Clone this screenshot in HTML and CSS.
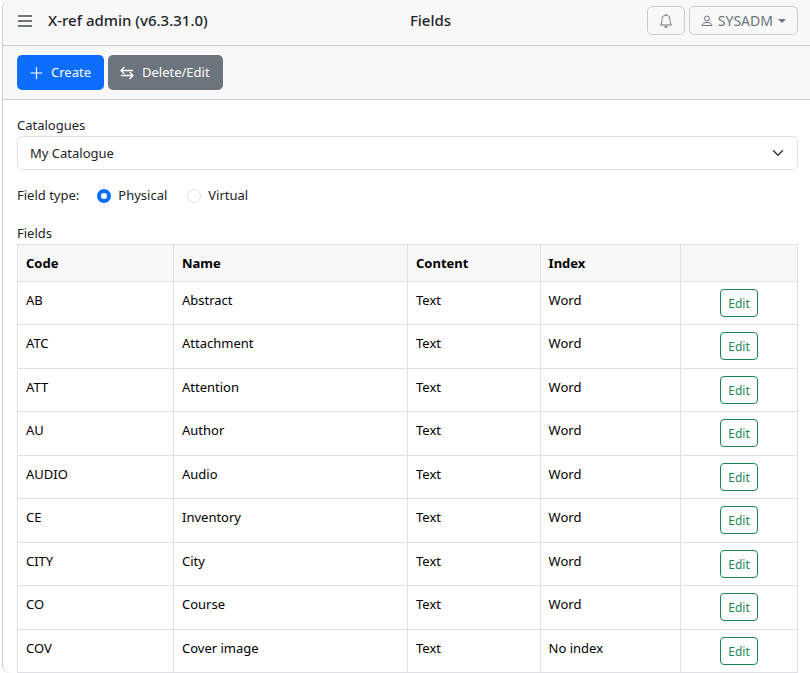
FILE: index.html
```html
<!DOCTYPE html>
<html lang="en">
<head>
    <meta charset="UTF-8">
    <meta name="viewport" content="width=device-width, initial-scale=1.0">
    <title>X-ref admin - Fields</title>
    <link rel="stylesheet" href="styles.css">
</head>
<body>
    <div class="window">
        <header class="header">
            <div class="brand">
                <button type="button" class="menu-btn" aria-label="Menu">
                    <svg width="14" height="12" viewBox="0 0 14 12" fill="currentColor"><path d="M0 0h14v2H0zM0 5h14v2H0zM0 10h14v2H0z"/></svg>
                </button>
                <span>X-ref admin (v6.3.31.0)</span>
            </div>
            <h1>Fields</h1>
            <div class="user">
                <button type="button" class="btn btn-light" aria-label="Notifications">
                    <svg width="14" height="14" viewBox="0 0 16 16" fill="currentColor"><path d="M8 16a2 2 0 0 0 2-2H6a2 2 0 0 0 2 2M8 1.918l-.797.161A4 4 0 0 0 4 6c0 .628-.134 2.197-.459 3.742-.16.767-.376 1.566-.663 2.258h10.244c-.287-.692-.502-1.49-.663-2.258C12.134 8.197 12 6.628 12 6a4 4 0 0 0-3.203-3.92zM14.22 12c.223.447.481.801.78 1H1c.299-.199.557-.553.78-1C2.68 10.2 3 6.88 3 6c0-2.42 1.72-4.44 4.005-4.901a1 1 0 1 1 1.99 0A5 5 0 0 1 13 6c0 .88.32 4.2 1.22 6"/></svg>
                </button>
                <button type="button" class="btn btn-light btn-user">
                    <svg width="12" height="12" viewBox="0 0 12 12" fill="none" stroke="currentColor"><circle cx="6" cy="3.500" r="2.500"/><path d="M1 10.500c0-2 2-3 5-3s5 1 5 3z" stroke-linejoin="round"/></svg>
                    <span>SYSADM</span>
                    <span class="caret"></span>
                </button>
            </div>
        </header>

        <div class="toolbar">
            <button type="button" class="btn btn-primary">
                <svg width="14" height="14" viewBox="0 0 14 14" fill="none" stroke="currentColor" stroke-width="1.200" stroke-linecap="round"><path d="M7.500 1.500v11M2 7h11"/></svg>
                Create
            </button>
            <button type="button" class="btn btn-secondary">
                <svg width="14" height="14" viewBox="0 0 14 14" fill="none" stroke="currentColor" stroke-width="1.300" stroke-linecap="round" stroke-linejoin="round"><path d="M12.500 4.500H1M4 1.500l-3 3 3 3M1.500 9.500H13M10 6.500l3 3-3 3"/></svg>
                Delete/Edit
            </button>
        </div>

        <main class="content">
            <label for="catalogue">Catalogues</label>
            <select id="catalogue">
                <option>My Catalogue</option>
            </select>

            <div class="field-type" role="radiogroup" aria-labelledby="type-label">
                <span id="type-label">Field type:</span>
                <input type="radio" id="physical" name="type" checked>
                <label for="physical">Physical</label>
                <input type="radio" id="virtual" name="type">
                <label for="virtual">Virtual</label>
            </div>

            <table>
                <caption>Fields</caption>
                <colgroup>
                    <col class="col-code">
                    <col class="col-name">
                    <col class="col-content">
                    <col class="col-index">
                    <col class="col-action">
                </colgroup>
                <thead>
                    <tr><th>Code</th><th>Name</th><th>Content</th><th>Index</th><th></th></tr>
                </thead>
                <tbody>
                    <tr><td>AB</td><td>Abstract</td><td>Text</td><td>Word</td><td><button type="button" class="btn-edit">Edit</button></td></tr>
                    <tr><td>ATC</td><td>Attachment</td><td>Text</td><td>Word</td><td><button type="button" class="btn-edit">Edit</button></td></tr>
                    <tr><td>ATT</td><td>Attention</td><td>Text</td><td>Word</td><td><button type="button" class="btn-edit">Edit</button></td></tr>
                    <tr><td>AU</td><td>Author</td><td>Text</td><td>Word</td><td><button type="button" class="btn-edit">Edit</button></td></tr>
                    <tr><td>AUDIO</td><td>Audio</td><td>Text</td><td>Word</td><td><button type="button" class="btn-edit">Edit</button></td></tr>
                    <tr><td>CE</td><td>Inventory</td><td>Text</td><td>Word</td><td><button type="button" class="btn-edit">Edit</button></td></tr>
                    <tr><td>CITY</td><td>City</td><td>Text</td><td>Word</td><td><button type="button" class="btn-edit">Edit</button></td></tr>
                    <tr><td>CO</td><td>Course</td><td>Text</td><td>Word</td><td><button type="button" class="btn-edit">Edit</button></td></tr>
                    <tr><td>COV</td><td>Cover image</td><td>Text</td><td>No index</td><td><button type="button" class="btn-edit">Edit</button></td></tr>
                </tbody>
            </table>
        </main>
    </div>
</body>
</html>
```
FILE: styles.css
```css
* {
    box-sizing: border-box;
}
body {
    margin: 0;
    padding-left: 2px;
    font-family: "Noto Sans", "Open Sans", sans-serif;
    font-size: 13px;
    line-height: 21px;
    color: #212529;
    background: #fff;
}
button,
select {
    font: inherit;
}
.window {
    min-height: 100vh;
    border-left: 1px solid #ccc;
    border-radius: 8px 0 0 8px;
    overflow: hidden;
}
.header {
    display: grid;
    grid-template-columns: 1fr auto 1fr;
    align-items: center;
    height: 46px;
    padding: 0 12px 4px 14px;
    background: #f8f8f8;
    border-bottom: 1px solid #ccc;
}
.brand {
    display: flex;
    align-items: center;
    gap: 15px;
    font-size: 15px;
    font-weight: 500;
}
.menu-btn {
    display: flex;
    padding: 0 1px;
    border: none;
    background: none;
    color: #6f7676;
    cursor: pointer;
}
h1 {
    margin: 0 0 0 46px;
    font-size: 15px;
    font-weight: 500;
}
.user {
    display: flex;
    justify-content: flex-end;
    gap: 4px;
}
.btn {
    display: inline-flex;
    align-items: center;
    justify-content: center;
    height: 35px;
    padding: 0 13px 0 12px;
    gap: 8px;
    border: none;
    border-radius: 5px;
    cursor: pointer;
}
.btn-light {
    height: 29px;
    padding: 0 11px;
    border: 1px solid #ccc;
    background: #f8f8f8;
    color: #6c757d;
}
.btn-user {
    gap: 5px;
    font-size: 14px;
}
.caret {
    border: 4px solid transparent;
    border-top-color: #6c757d;
    border-bottom: none;
}
.toolbar {
    display: flex;
    align-items: center;
    gap: 4px;
    height: 54px;
    padding: 0 14px;
    background: #f8f8f8;
    border-bottom: 1px solid #ccc;
}
.btn-primary {
    background: #0d6efd;
    color: #fff;
}
.btn-secondary {
    background: #6c757d;
    color: #fff;
}
.content {
    padding: 15px 12px 0 14px;
}
.content > label {
    display: block;
}
select {
    appearance: none;
    display: block;
    width: 100%;
    height: 34px;
    padding: 0 12px;
    border: 1px solid #dee2e6;
    border-radius: 5px;
    color: #212529;
    background: #fff url("data:image/svg+xml,%3Csvg xmlns='http://www.w3.org/2000/svg' viewBox='0 0 16 16'%3E%3Cpath fill='none' stroke='%23343a40' stroke-linecap='round' stroke-linejoin='round' stroke-width='2' d='m2 5 6 6 6-6'/%3E%3C/svg%3E") no-repeat right 13px center / 12px 12px;
}
.field-type {
    display: flex;
    align-items: center;
    margin: 15px 0 17px;
}
.field-type input {
    appearance: none;
    width: 14px;
    height: 14px;
    margin: 0 7px 0 20px;
    border: 1px solid #dee2e6;
    border-radius: 50%;
}
.field-type span + input {
    margin-left: 18px;
}
.field-type input:checked {
    border: 4px solid #0d6efd;
}
table {
    width: 100%;
    table-layout: fixed;
    border-collapse: collapse;
    color: #000;
}
caption {
    color: #212529;
    text-align: left;
}
.col-code {
    width: 20%;
}
.col-name {
    width: 30%;
}
.col-content {
    width: 17%;
}
.col-index {
    width: 18%;
}
.col-action {
    width: 15%;
}
th,
td {
    padding: 7px 8px 0;
    border: 1px solid #dee2e6;
    line-height: 23px;
    text-align: left;
    vertical-align: top;
}
th {
    height: 37px;
    background: #f8f8f8;
    font-weight: 700;
}
td {
    height: 43px;
}
tr:nth-child(even) td {
    height: 44px;
}
.btn-edit {
    display: block;
    height: 28px;
    margin: 0 auto;
    padding: 0 7px;
    border: 1px solid #198754;
    border-radius: 4px;
    background: #fff;
    color: #198754;
    font-size: 12px;
    cursor: pointer;
}
```
